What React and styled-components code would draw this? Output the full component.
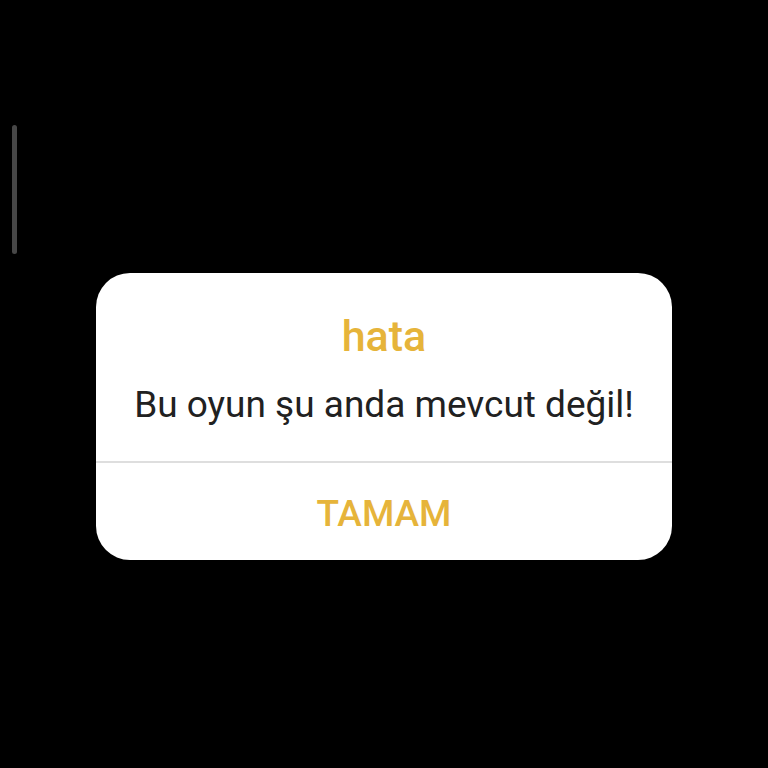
import React from "react";
import styled, { createGlobalStyle } from "styled-components";

const GlobalStyle = createGlobalStyle`
  html, body {
    margin: 0;
    padding: 0;
    background: #000;
  }
  body {
    font-family: Roboto, "Noto Sans", sans-serif;
  }
`;

const Screen = styled.div`
  position: relative;
  width: 768px;
  height: 768px;
  background: #000;
  display: flex;
  flex-direction: column;
  align-items: center;
  padding-top: 273px;
  box-sizing: border-box;
`;

const ScrollThumb = styled.div`
  position: absolute;
  left: 12px;
  top: 125px;
  width: 5px;
  height: 129px;
  border-radius: 3px;
  background: #474747;
`;

const Dialog = styled.div`
  width: 576px;
  height: 287px;
  background: #fff;
  border-radius: 34px;
  display: flex;
  flex-direction: column;
  overflow: hidden;
`;

const Body = styled.div`
  height: 190px;
  display: flex;
  flex-direction: column;
  align-items: center;
  padding-top: 38px;
  box-sizing: border-box;
  border-bottom: 2px solid #dedede;
`;

const Title = styled.h2`
  margin: 0;
  font-size: 43px;
  line-height: 50px;
  font-weight: 500;
  color: #e6b43a;
`;

const Message = styled.p`
  margin: 22px 0 0;
  font-size: 37px;
  line-height: 44px;
  font-weight: 400;
  color: #212121;
`;

const OkButton = styled.button`
  flex: 1;
  border: 0;
  background: transparent;
  font-family: Roboto, "Noto Sans", sans-serif;
  font-size: 37px;
  font-weight: 500;
  color: #e6b43a;
  padding: 4px 0 0;
  cursor: pointer;
`;

const App = () => {
  return (
    <>
      <GlobalStyle />
      <Screen>
        <ScrollThumb />
        <Dialog>
          <Body>
            <Title>hata</Title>
            <Message>Bu oyun şu anda mevcut değil!</Message>
          </Body>
          <OkButton>TAMAM</OkButton>
        </Dialog>
      </Screen>
    </>
  );
};

export default App;
